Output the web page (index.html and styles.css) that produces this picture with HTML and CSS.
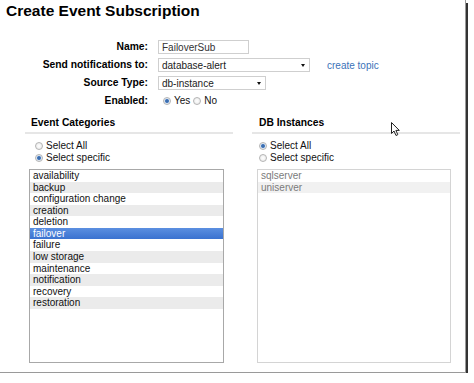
FILE: index.html
```html
<!DOCTYPE html>
<html lang="en">
<head>
    <meta charset="UTF-8">
    <title>Create Event Subscription</title>
    <link rel="stylesheet" href="styles.css">
</head>
<body>
    <div class="frame">
        <h1>Create Event Subscription</h1>
        <form class="settings">
            <label for="name">Name:</label>
            <div class="field"><input type="text" id="name" class="text-input" value="FailoverSub"></div>

            <label>Send notifications to:</label>
            <div class="field">
                <div class="select wide"><span>database-alert</span><i class="arrow"></i></div>
                <a href="#" class="link">create topic</a>
            </div>

            <label>Source Type:</label>
            <div class="field">
                <div class="select narrow"><span>db-instance</span><i class="arrow"></i></div>
            </div>

            <label>Enabled:</label>
            <div class="field">
                <label class="choice"><input type="radio" name="enabled" checked> Yes</label>
                <label class="choice"><input type="radio" name="enabled"> No</label>
            </div>
        </form>

        <div class="panels">
            <section class="panel">
                <h2>Event Categories</h2>
                <div class="choices">
                    <label class="choice"><input type="radio" name="categories"> Select All</label>
                    <label class="choice"><input type="radio" name="categories" checked> Select specific</label>
                </div>
                <ul class="listbox">
                    <li>availability</li>
                    <li>backup</li>
                    <li>configuration change</li>
                    <li>creation</li>
                    <li>deletion</li>
                    <li class="selected">failover</li>
                    <li>failure</li>
                    <li>low storage</li>
                    <li>maintenance</li>
                    <li>notification</li>
                    <li>recovery</li>
                    <li>restoration</li>
                </ul>
            </section>

            <section class="panel right">
                <h2>DB Instances</h2>
                <div class="choices">
                    <label class="choice"><input type="radio" name="instances" checked> Select All</label>
                    <label class="choice"><input type="radio" name="instances"> Select specific</label>
                </div>
                <ul class="listbox disabled">
                    <li>sqlserver</li>
                    <li>uniserver</li>
                </ul>
            </section>
        </div>

        <!-- mouse pointer -->
        <svg class="cursor" width="10" height="15" viewBox="0 0 10 15">
            <path d="M0.5 0.5 L0.5 11.5 L3 9 L5 13.5 L6.8 12.7 L4.9 8.4 L8.3 8.4 Z" fill="#fff" stroke="#222" stroke-width="1" stroke-linejoin="round"/>
        </svg>
    </div>
</body>
</html>
```

FILE: styles.css
```css
body {
    margin: 0;
    background: #fff;
    color: #000;
    font-family: "Liberation Sans", Arial, sans-serif;
    font-size: 10px;
}

.frame {
    position: relative;
    width: 465px;
    height: 372px;
    border-right: 1px solid #9a9a9a;
    border-bottom: 1px solid #9a9a9a;
    box-shadow: 2px 3px 0 #333;
}

h1 {
    margin: 0;
    padding: 2px 0 0 6px;
    font-size: 15.5px;
    line-height: 18px;
}

/* formulier bovenaan */
.settings {
    display: grid;
    grid-template-columns: 148px auto;
    column-gap: 10px;
    row-gap: 4px;
    margin-top: 20px;
}

.settings > label {
    text-align: right;
    font-weight: bold;
    font-size: 10.3px;
    line-height: 14px;
}

.field {
    display: flex;
    align-items: center;
    height: 14px;
}

.text-input {
    box-sizing: border-box;
    width: 91px;
    height: 14px;
    margin: 0;
    padding: 0 3px;
    border: 1px solid #cfcfcf;
    font-family: inherit;
    font-size: 10px;
    color: #333;
}

.select {
    box-sizing: border-box;
    height: 14px;
    padding: 0 4px 0 3px;
    border: 1px solid #cfcfcf;
    display: flex;
    align-items: center;
    justify-content: space-between;
    color: #222;
}

.select.wide { width: 152px; }
.select.narrow { width: 108px; }

.arrow {
    border-left: 2.5px solid transparent;
    border-right: 2.5px solid transparent;
    border-top: 3px solid #111;
}

.link {
    margin-left: 17px;
    color: #3b72b8;
    text-decoration: none;
}

.choice {
    display: flex;
    align-items: center;
    gap: 2px;
    line-height: 12px;
    color: #111;
}

.field .choice { margin-left: 5px; }
.field .choice + .choice { margin-left: 3px; }

.choice input {
    appearance: none;
    box-sizing: border-box;
    width: 8px;
    height: 8px;
    margin: 0 1px 0 0;
    border: 1px solid #b4b4b4;
    border-radius: 50%;
    background: radial-gradient(circle, #fff 0, #e6e6e6 100%);
}

.choice input:checked {
    background: radial-gradient(circle, #2f5f9e 0, #4d7fc0 1.6px, #dfe8f3 2.4px, #eef2f7 100%);
}

/* onderste twee panelen */
.panels {
    display: flex;
    gap: 19px;
    margin: 8px 0 0 25px;
}

.panel {
    width: 208px;
}

h2 {
    margin: 0;
    padding: 0 0 3px 6px;
    font-size: 10.3px;
    line-height: 13px;
    border-bottom: 2px solid #e6e6e6;
}

.right h2 { padding-left: 7px; }

.choices {
    margin: 6px 0 5px 10px;
}

.right .choices { margin-left: 7px; }

.listbox {
    box-sizing: border-box;
    width: 195px;
    height: 194px;
    margin: 0 0 0 4px;
    padding: 0;
    list-style: none;
    border: 1px solid #a8a8a8;
}

.right .listbox {
    margin-left: 5px;
    width: 194px;
    border-color: #d4d4d4;
}

.listbox li {
    height: 11.58px;
    line-height: 11.58px;
    padding-left: 3px;
    color: #111;
}

.listbox li:nth-child(even) {
    background: #ebebeb;
}

.listbox li.selected {
    background: linear-gradient(#5b8fe0, #3a72d0);
    color: #fff;
}

.listbox.disabled li {
    color: #7b7b7b;
}

.listbox.disabled li:nth-child(even) {
    background: #f1f1f1;
}

.cursor {
    position: absolute;
    left: 391px;
    top: 122px;
}
```
